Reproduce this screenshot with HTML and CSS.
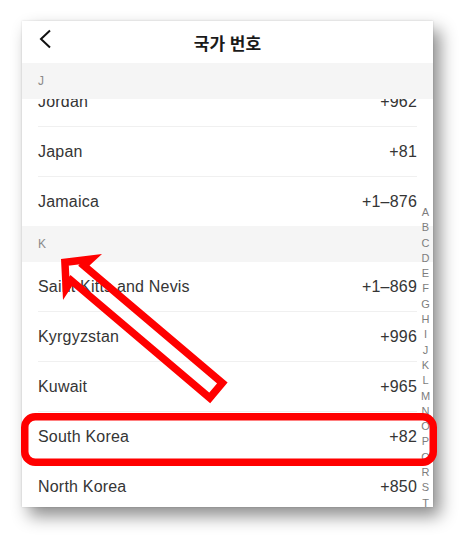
FILE: index.html
```html
<!DOCTYPE html>
<html lang="ko">
  <head>
    <meta charset="UTF-8" />
    <meta name="viewport" content="width=device-width, initial-scale=1.0" />
    <title>국가 번호</title>
    <link rel="stylesheet" href="styles.css">
  </head>
  <body>
    <div class="stage">
      <div class="phone">
        <div class="topbar">
          <svg class="back" width="14" height="20" viewBox="0 0 14 20">
            <polyline points="11,1.5 2,10 11,18.5" fill="none" stroke="#111" stroke-width="2" />
          </svg>
          <h1>국가 번호</h1>
        </div>

        <div class="list">
          <div class="section-head sticky">J</div>
          <div class="row first-hidden"><span>Jordan</span><span>+962</span></div>
          <div class="row"><span>Japan</span><span>+81</span></div>
          <div class="row last"><span>Jamaica</span><span>+1–876</span></div>

          <div class="section-head">K</div>
          <div class="row"><span>Saint Kitts and Nevis</span><span>+1–869</span></div>
          <div class="row"><span>Kyrgyzstan</span><span>+996</span></div>
          <div class="row"><span>Kuwait</span><span>+965</span></div>
          <div class="row"><span>South Korea</span><span>+82</span></div>
          <div class="row"><span>North Korea</span><span>+850</span></div>
        </div>

        <ul class="index-bar">
          <li>A</li><li>B</li><li>C</li><li>D</li><li>E</li><li>F</li><li>G</li>
          <li>H</li><li>I</li><li>J</li><li>K</li><li>L</li><li>M</li><li>N</li>
          <li>O</li><li>P</li><li>Q</li><li>R</li><li>S</li><li>T</li>
        </ul>
      </div>

      <!-- annotation layer -->
      <svg class="marks" width="475" height="549" viewBox="0 0 475 549">
        <defs>
          <clipPath id="arrow-clip">
            <polygon points="61,259 102,254 89.5,265.5 227.6,382.6 210.2,403.2 72.1,286.1 63,300" />
          </clipPath>
        </defs>
        <polygon points="61,259 102,254 89.5,265.5 227.6,382.6 210.2,403.2 72.1,286.1 63,300"
          fill="none" stroke="#ff0000" stroke-width="15" stroke-miterlimit="12" clip-path="url(#arrow-clip)" />
        <rect x="24.75" y="416.75" width="408.5" height="45.5" rx="10.5"
          fill="none" stroke="#ff0000" stroke-width="7.5" />
      </svg>
    </div>
  </body>
</html>
```

FILE: styles.css
```css
/* Reset & Global Styling */
* {
  box-sizing: border-box;
  margin: 0;
  padding: 0;
}

body {
  background: #fff;
  font-family: "Liberation Sans", Arial, sans-serif;
  color: #333;
}

.stage {
  position: relative;
  width: 475px;
  height: 549px;
  padding: 21px 0 0 22px;
}

/* Phone screenshot card */
.phone {
  position: relative;
  width: 411px;
  height: 486px;
  overflow: hidden;
  background: #fff;
  box-shadow: 7px 9px 16px rgba(0, 0, 0, 0.45), 0 0 2px rgba(0, 0, 0, 0.15);
}

/* Top bar */
.topbar {
  position: relative;
  height: 42px;
  display: flex;
  align-items: center;
  justify-content: center;
}

.topbar h1 {
  font-family: "Noto Sans CJK KR", sans-serif;
  font-size: 17px;
  font-weight: 600;
  color: #1a1a1a;
}

.back {
  position: absolute;
  left: 17px;
  top: 8px;
}

/* List */
.section-head {
  height: 36px;
  line-height: 36px;
  padding-left: 16px;
  background: #f5f5f5;
  font-size: 12px;
  color: #8a8a8a;
}

.section-head.sticky {
  position: relative;
  z-index: 1;
}

.row {
  height: 50px;
  margin: 0 16px;
  display: flex;
  align-items: center;
  justify-content: space-between;
  border-bottom: 1px solid #f0f0f0;
  font-size: 16px;
  letter-spacing: 0.2px;
  color: #353535;
}

.row.first-hidden {
  margin-top: -22px;
}

.row.last {
  height: 49px;
  border-bottom: none;
}

/* Alphabet index */
.index-bar {
  position: absolute;
  right: 0;
  top: 184px;
  width: 15px;
  list-style: none;
  text-align: center;
  font-size: 11px;
  line-height: 15.3px;
  color: #7d7d7d;
}

/* Annotations */
.marks {
  position: absolute;
  left: 0;
  top: 0;
}
```
